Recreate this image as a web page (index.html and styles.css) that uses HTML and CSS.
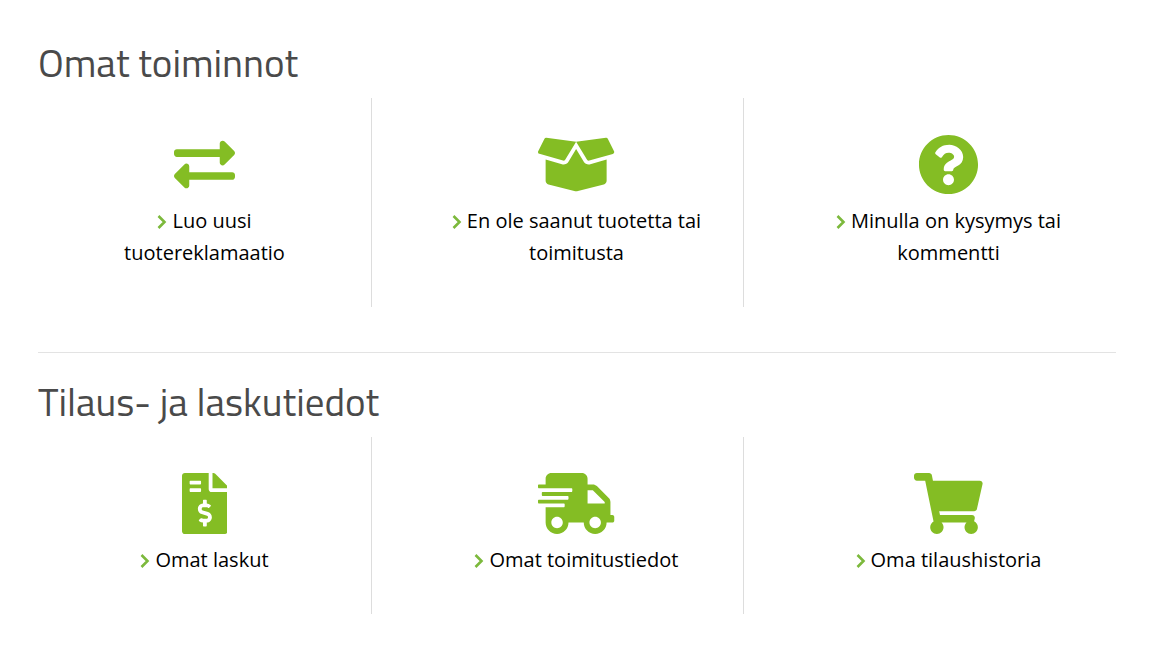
FILE: index.html
```html
<!DOCTYPE html>
<html lang="fi">
<head>
  <meta charset="UTF-8" />
  <meta name="viewport" content="width=device-width, initial-scale=1" />
  <title>Omat toiminnot</title>
  <link rel="stylesheet" href="styles.css">
</head>
<body>
  <svg class="sprite" aria-hidden="true">
    <symbol id="chevron" viewBox="0 0 10 14">
      <path d="M1.5 1L7.5 7L1.5 13" fill="none" stroke="currentColor" stroke-width="2.6"/>
    </symbol>
  </svg>

  <main class="page">
    <section class="section">
      <h2>Omat toiminnot</h2>
      <div class="cards">
        <div class="card">
          <svg class="icon" viewBox="0 0 512 512" aria-hidden="true"><path d="M0 168v-16c0-13.255 10.745-24 24-24h360V80c0-21.367 25.899-32.042 40.971-16.971l80 80c9.372 9.373 9.372 24.569 0 33.941l-80 80C409.956 271.982 384 261.456 384 240v-48H24c-13.255 0-24-10.745-24-24zm488 152H128v-48c0-21.314-25.862-32.08-40.971-16.971l-80 80c-9.372 9.373-9.372 24.569 0 33.941l80 80C102.057 463.997 128 453.437 128 432v-48h360c13.255 0 24-10.745 24-24v-16c0-13.255-10.745-24-24-24z"/></svg>
          <a href="#"><svg class="chevron" aria-hidden="true"><use href="#chevron"/></svg>Luo uusi tuotereklamaatio</a>
        </div>
        <div class="card">
          <svg class="icon" viewBox="0 0 640 512" aria-hidden="true"><path d="M425.7 256c-16.9 0-32.8-9-41.4-23.4L320 126l-64.2 106.6c-8.7 14.5-24.6 23.5-41.5 23.5-4.5 0-9-.6-13.3-1.9L64 215v178c0 14.7 10 27.5 24.2 31l216.2 54.1c10.2 2.5 20.9 2.5 31 0L551.8 424c14.2-3.6 24.2-16.4 24.2-31V215l-137 39.1c-4.3 1.3-8.8 1.9-13.3 1.9zm212.6-112.2L586.8 41c-3.1-6.2-9.8-9.8-16.7-8.9L320 64l91.7 152.1c3.8 6.3 11.4 9.3 18.5 7.3l197.9-56.5c9.9-2.9 14.7-13.9 10.2-23.1zM53.2 41L1.7 143.8c-4.6 9.2.3 20.2 10.1 23l197.9 56.5c7.1 2 14.7-1 18.5-7.3L320 64 69.8 32.1c-6.9-.8-13.5 2.7-16.6 8.9z"/></svg>
          <a href="#"><svg class="chevron" aria-hidden="true"><use href="#chevron"/></svg>En ole saanut tuotetta tai toimitusta</a>
        </div>
        <div class="card">
          <svg class="icon" viewBox="0 0 512 512" aria-hidden="true"><path d="M504 256c0 136.997-111.043 248-248 248S8 392.997 8 256C8 119.083 119.043 8 256 8s248 111.083 248 248zM262.655 90c-54.497 0-89.255 22.957-116.549 63.758-3.536 5.286-2.353 12.415 2.715 16.258l34.699 26.31c5.205 3.947 12.621 3.008 16.665-2.122 17.864-22.658 30.113-35.797 57.303-35.797 20.429 0 45.698 13.148 45.698 32.958 0 14.976-12.363 22.667-32.534 33.976C247.128 238.528 216 254.941 216 296v4c0 6.627 5.373 12 12 12h56c6.627 0 12-5.373 12-12v-1.333c0-28.462 83.186-29.647 83.186-106.667 0-58.002-60.165-102-116.531-102zM256 338c-25.365 0-46 20.635-46 46 0 25.364 20.635 46 46 46s46-20.636 46-46c0-25.365-20.635-46-46-46z"/></svg>
          <a href="#"><svg class="chevron" aria-hidden="true"><use href="#chevron"/></svg>Minulla on kysymys tai kommentti</a>
        </div>
      </div>
    </section>

    <section class="section">
      <h2>Tilaus- ja laskutiedot</h2>
      <div class="cards">
        <div class="card">
          <svg class="icon" viewBox="0 0 384 512" aria-hidden="true"><path d="M377 105L279.1 7c-4.5-4.5-10.6-7-17-7H256v128h128v-6.1c0-6.3-2.5-12.4-7-16.9zm-153 31V0H24C10.7 0 0 10.7 0 24v464c0 13.3 10.7 24 24 24h336c13.3 0 24-10.7 24-24V160H248c-13.2 0-24-10.8-24-24zM64 72c0-4.42 3.58-8 8-8h80c4.42 0 8 3.58 8 8v16c0 4.42-3.58 8-8 8H72c-4.42 0-8-3.58-8-8V72zm0 80v-16c0-4.42 3.58-8 8-8h80c4.42 0 8 3.58 8 8v16c0 4.42-3.58 8-8 8H72c-4.42 0-8-3.58-8-8zm144 263.88V440c0 4.42-3.58 8-8 8h-16c-4.42 0-8-3.58-8-8v-24.29c-11.29-.58-22.27-4.52-31.37-11.35-3.9-2.93-4.1-8.77-.57-12.14l11.75-11.21c2.77-2.64 6.89-2.76 10.13-.73 3.87 2.42 8.26 3.72 12.82 3.72h28.11c6.5 0 11.8-5.92 11.8-13.19 0-5.95-3.61-11.19-8.77-12.73l-45-13.5c-18.59-5.58-31.58-23.42-31.58-43.39 0-24.52 19.05-44.44 42.67-45.07V232c0-4.42 3.58-8 8-8h16c4.42 0 8 3.58 8 8v24.29c11.29.58 22.27 4.51 31.37 11.35 3.9 2.93 4.1 8.77.57 12.14l-11.75 11.21c-2.77 2.64-6.89 2.76-10.13.73-3.87-2.43-8.26-3.72-12.82-3.72h-28.11c-6.5 0-11.8 5.92-11.8 13.19 0 5.95 3.61 11.19 8.77 12.73l45 13.5c18.59 5.58 31.58 23.42 31.58 43.39 0 24.53-19.05 44.44-42.67 45.07z"/></svg>
          <a href="#"><svg class="chevron" aria-hidden="true"><use href="#chevron"/></svg>Omat laskut</a>
        </div>
        <div class="card">
          <svg class="icon" viewBox="0 0 640 512" aria-hidden="true"><path d="M624 352h-16V243.9c0-12.7-5.1-24.9-14.1-33.9L494 110.1c-9-9-21.2-14.1-33.9-14.1H416V48c0-26.5-21.5-48-48-48H112C85.5 0 64 21.5 64 48v48H8c-4.4 0-8 3.6-8 8v16c0 4.4 3.6 8 8 8h272c4.4 0 8 3.6 8 8v16c0 4.4-3.6 8-8 8H40c-4.4 0-8 3.6-8 8v16c0 4.4 3.6 8 8 8h208c4.4 0 8 3.6 8 8v16c0 4.4-3.6 8-8 8H8c-4.4 0-8 3.6-8 8v16c0 4.4 3.6 8 8 8h208c4.4 0 8 3.6 8 8v16c0 4.4-3.6 8-8 8H64v128c0 53 43 96 96 96s96-43 96-96h128c0 53 43 96 96 96s96-43 96-96h48c8.8 0 16-7.2 16-16v-32c0-8.8-7.2-16-16-16zM160 464c-26.5 0-48-21.5-48-48s21.5-48 48-48 48 21.5 48 48-21.5 48-48 48zm320 0c-26.5 0-48-21.5-48-48s21.5-48 48-48 48 21.5 48 48-21.5 48-48 48zm80-208H416V144h44.1l99.9 99.9V256z"/></svg>
          <a href="#"><svg class="chevron" aria-hidden="true"><use href="#chevron"/></svg>Omat toimitustiedot</a>
        </div>
        <div class="card">
          <svg class="icon" viewBox="0 0 576 512" aria-hidden="true"><path d="M528.12 301.319l47.273-208C578.806 78.301 567.391 64 551.99 64H159.208l-9.166-44.81C147.758 8.021 137.93 0 126.529 0H24C10.745 0 0 10.745 0 24v16c0 13.255 10.745 24 24 24h69.883l70.248 343.435C147.325 417.1 136 435.222 136 456c0 30.928 25.072 56 56 56s56-25.072 56-56c0-15.674-6.447-29.835-16.824-40h209.647C430.447 426.165 424 440.326 424 456c0 30.928 25.072 56 56 56s56-25.072 56-56c0-22.172-12.888-41.332-31.579-50.405l5.517-24.276c3.413-15.018-8.002-29.319-23.403-29.319H218.117l-6.545-32h293.145c11.206 0 20.92-7.754 23.403-18.681z"/></svg>
          <a href="#"><svg class="chevron" aria-hidden="true"><use href="#chevron"/></svg>Oma tilaushistoria</a>
        </div>
      </div>
    </section>
  </main>
</body>
</html>
```
FILE: styles.css
```css
* {
  box-sizing: border-box;
}
body {
  margin: 0;
  background: #fff;
  color: #000;
  font-family: "Open Sans", sans-serif;
  font-size: 20px;
  line-height: 32px;
}
.sprite {
  display: none;
}
.page {
  padding: 38px 41px 38px 38px;
}
.section + .section {
  margin-top: 45px;
  padding-top: 24px;
  border-top: 1px solid #e3e3e3;
}
h2 {
  margin: 0 0 10px;
  color: #4a4a4a;
  font-family: "Titillium Web", Roboto, sans-serif;
  font-size: 39px;
  font-weight: 400;
  line-height: 50px;
}
.cards {
  display: grid;
  grid-template-columns: repeat(3, 1fr);
  gap: 38px;
}
.card {
  padding: 36px 38px 38px;
  border-right: 1px solid #ddd;
  text-align: center;
}
.card:last-child {
  border-right-color: transparent;
}
.icon {
  display: block;
  height: 61px;
  margin: 0 auto 10px;
  fill: #84bd24;
}
.card a {
  color: #000;
  text-decoration: none;
}
.card a:hover {
  text-decoration: underline;
}
.chevron {
  width: 10px;
  height: 14px;
  margin-right: 5px;
  vertical-align: -1px;
  color: #7cb93c;
}
```
